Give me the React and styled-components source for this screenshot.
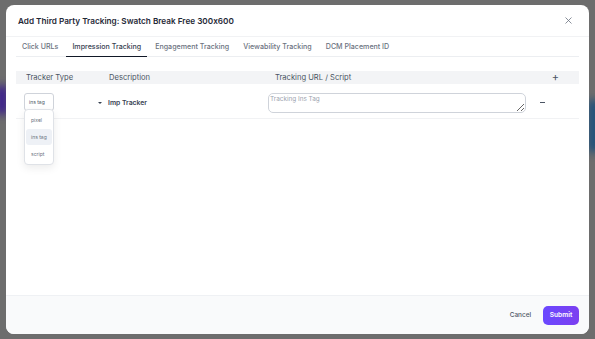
import React from "react";
import styled, { createGlobalStyle } from "styled-components";

const Global = createGlobalStyle`
  html, body { margin: 0; padding: 0; }
  body { background: #6d6d6d; font-family: Inter, "Noto Sans", sans-serif; font-feature-settings: "calt" 0; }
  * { box-sizing: border-box; }
`;

const Page = styled.div`
  position: relative;
  width: 595px;
  height: 339px;
  overflow: hidden;
  background: #6d6d6d;
  padding: 5px 6px;
`;

const Glow = styled.div`
  position: absolute;
  left: ${(p) => p.$x}px;
  top: ${(p) => p.$y}px;
  width: ${(p) => p.$w}px;
  height: ${(p) => p.$h}px;
  background: ${(p) => p.$c};
  filter: blur(4px);
`;

const Modal = styled.div`
  position: relative;
  width: 583px;
  height: 329px;
  background: #fff;
  border-radius: 8px;
  display: flex;
  flex-direction: column;
  overflow: hidden;
`;

const Header = styled.div`
  height: 32px;
  display: flex;
  align-items: center;
  justify-content: space-between;
  padding: 0 16px 0 12px;
  border-bottom: 1px solid #f1f2f4;
  flex-shrink: 0;
`;

const Title = styled.h1`
  margin: 0;
  font-size: 8.2px;
  font-weight: 600;
  color: #1f2937;
  font-feature-settings: "calt" 0;
`;

const Close = styled.button`
  border: 0;
  background: none;
  padding: 0;
  width: 9px;
  height: 9px;
  display: flex;
  color: #6b7280;
`;

const Body = styled.div`
  flex: 1;
  padding: 0 10px;
  display: flex;
  flex-direction: column;
`;

const Tabs = styled.div`
  display: flex;
  gap: 2px;
  height: 20px;
  border-bottom: 1px solid #eceef1;
`;

const Tab = styled.div`
  padding: 0 6px;
  display: flex;
  align-items: center;
  font-size: 7.1px;
  font-weight: 500;
  color: ${(p) => (p.$active ? "#374151" : "#6b7280")};
  border-bottom: 1.5px solid ${(p) => (p.$active ? "#111827" : "transparent")};
  margin-bottom: -1px;
`;

const Table = styled.div`
  margin-top: 14px;
  display: flex;
  flex-direction: column;
`;

const cols = "82px 170px 264px 1fr";

const HeadRow = styled.div`
  display: grid;
  grid-template-columns: ${cols};
  height: 13px;
  background: #f3f4f6;
  align-items: center;
`;

const HeadCell = styled.div`
  font-size: 7.6px;
  color: #4b5563;
  padding-left: ${(p) => p.$pad || 0}px;
  text-align: ${(p) => (p.$center ? "center" : "left")};
`;

const Plus = styled.span`
  font-size: 11px;
  color: #4b5563;
  line-height: 1;
`;

const Row = styled.div`
  display: grid;
  grid-template-columns: ${cols};
  height: 35px;
  border-bottom: 1px solid #f1f2f4;
  align-items: start;
`;

const Cell = styled.div`
  position: relative;
  padding-left: ${(p) => p.$pad}px;
  padding-top: ${(p) => p.$top}px;
  display: flex;
  align-items: center;
`;

const Select = styled.div`
  width: 30px;
  height: 18px;
  border: 1px solid #cfd3da;
  border-radius: 3px;
  font-size: 5px;
  color: #4b5563;
  display: flex;
  align-items: center;
  padding-left: 4px;
  background: #fff;
`;

const Menu = styled.div`
  position: absolute;
  left: 8px;
  top: 25px;
  width: 30px;
  height: 56px;
  background: #fff;
  border: 1px solid #dfe2e7;
  border-radius: 4px;
  box-shadow: 0 3px 8px rgba(0, 0, 0, 0.08);
  display: flex;
  flex-direction: column;
  padding: 2px 1px;
  z-index: 2;
`;

const Option = styled.div`
  height: 17px;
  display: flex;
  align-items: center;
  padding-left: 5px;
  font-size: 5px;
  color: #6b7280;
  border-radius: 3px;
  background: ${(p) => (p.$hl ? "#eef1f6" : "transparent")};
`;

const Desc = styled.div`
  display: flex;
  align-items: center;
  gap: 6px;
  font-size: 6.8px;
  font-weight: 600;
  color: #374151;
`;

const Caret = styled.span`
  width: 0;
  height: 0;
  border-left: 2.2px solid transparent;
  border-right: 2.2px solid transparent;
  border-top: 2.6px solid #374151;
`;

const TextArea = styled.textarea`
  width: 258px;
  height: 20px;
  border: 1px solid #cfd3da;
  border-radius: 5px;
  padding: 1px 1px;
  font-family: Inter, "Noto Sans", sans-serif;
  font-size: 6.4px;
  line-height: 8px;
  color: #374151;
  resize: vertical;
  outline: none;
  &::placeholder { color: #9ca3af; }
`;

const Minus = styled.span`
  display: block;
  width: 5px;
  height: 1.3px;
  background: #4b5563;
`;

const Footer = styled.div`
  height: 39px;
  flex-shrink: 0;
  background: #f9fafb;
  border-top: 1px solid #eff1f4;
  display: flex;
  align-items: center;
  justify-content: flex-end;
  gap: 12px;
  padding: 0 10px;
`;

const Cancel = styled.button`
  border: 0;
  background: none;
  font-family: Inter, "Noto Sans", sans-serif;
  font-size: 6.4px;
  font-weight: 500;
  color: #4b5563;
  padding: 0;
`;

const Submit = styled.button`
  width: 36px;
  height: 19px;
  border: 0;
  border-radius: 5px;
  background: linear-gradient(90deg, #6b48ff, #7b3ff0);
  color: #fff;
  font-family: Inter, "Noto Sans", sans-serif;
  font-size: 6.6px;
  font-weight: 600;
  padding: 0;
`;

export default function App() {
  return (
    <>
      <Global />
      <Page>
        <Glow $x={-4} $y={86} $w={12} $h={28} $c="#3a1d8e" />
        <Glow $x={588} $y={100} $w={12} $h={52} $c="#1d4f7c" />
        <Modal>
          <Header>
            <Title>Add Third Party Tracking: Swatch Break Free 300x600</Title>
            <Close aria-label="close">
              <svg width="9" height="9" viewBox="0 0 9 9">
                <path d="M1.5 1.5 L7.5 7.5 M7.5 1.5 L1.5 7.5" stroke="currentColor" strokeWidth="0.8" />
              </svg>
            </Close>
          </Header>
          <Body>
            <Tabs>
              <Tab>Click URLs</Tab>
              <Tab $active>Impression Tracking</Tab>
              <Tab>Engagement Tracking</Tab>
              <Tab>Viewability Tracking</Tab>
              <Tab>DCM Placement ID</Tab>
            </Tabs>
            <Table>
              <HeadRow>
                <HeadCell $pad={10}>Tracker Type</HeadCell>
                <HeadCell $pad={11}>Description</HeadCell>
                <HeadCell $pad={7}>Tracking URL / Script</HeadCell>
                <HeadCell $center>
                  <Plus>+</Plus>
                </HeadCell>
              </HeadRow>
              <Row>
                <Cell $pad={8} $top={9}>
                  <Select>ins tag</Select>
                  <Menu>
                    <Option>pixel</Option>
                    <Option $hl>ins tag</Option>
                    <Option>script</Option>
                  </Menu>
                </Cell>
                <Cell $pad={0} $top={14}>
                  <Desc>
                    <Caret />
                    Imp Tracker
                  </Desc>
                </Cell>
                <Cell $pad={0} $top={9}>
                  <TextArea placeholder="Tracking Ins Tag" />
                </Cell>
                <Cell $pad={8} $top={18}>
                  <Minus />
                </Cell>
              </Row>
            </Table>
          </Body>
          <Footer>
            <Cancel>Cancel</Cancel>
            <Submit>Submit</Submit>
          </Footer>
        </Modal>
      </Page>
    </>
  );
}
